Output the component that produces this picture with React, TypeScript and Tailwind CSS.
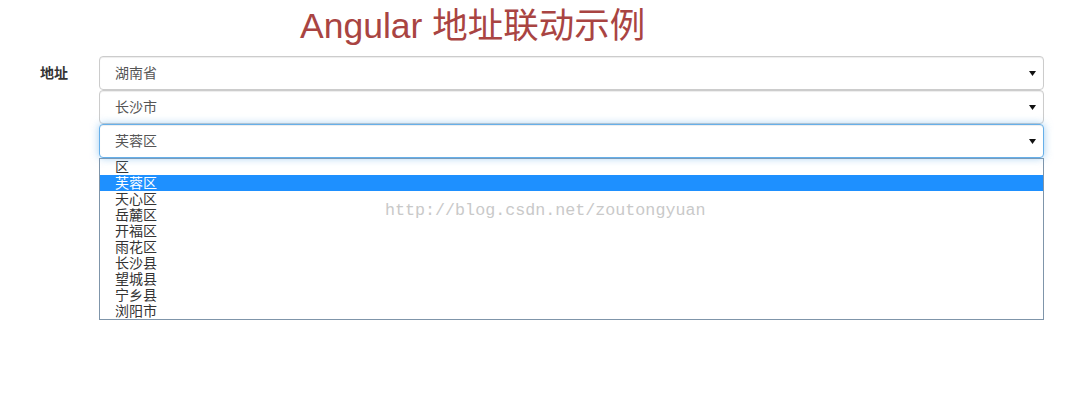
import React from "react";

const Arrow = () => (
  <svg width="7" height="5" viewBox="0 0 7 5" className="shrink-0">
    <polygon points="0,0 7,0 3.5,5" fill="#111" />
  </svg>
);

const SelectBox = ({ value, focused }: { value: string; focused?: boolean }) => (
  <div
    className={
      focused
        ? "h-[34px] flex items-center justify-between pl-[15px] pr-[7px] bg-white rounded-[4px] border border-[#66afe9] shadow-[inset_0_1px_1px_rgba(0,0,0,0.075),0_0_8px_rgba(102,175,233,0.6)] relative z-10"
        : "h-[34px] flex items-center justify-between pl-[15px] pr-[7px] bg-white rounded-[4px] border border-[#cccccc] shadow-[inset_0_1px_1px_rgba(0,0,0,0.075)]"
    }
  >
    <span className="text-[14px] leading-[20px] text-[#555555]">{value}</span>
    <Arrow />
  </div>
);

const options = ["区", "芙蓉区", "天心区", "岳麓区", "开福区", "雨花区", "长沙县", "望城县", "宁乡县", "浏阳市"];

export default function App() {
  return (
    <div className="relative w-[1075px] h-[402px] bg-white font-['Liberation_Sans','Noto_Sans_CJK_SC',sans-serif] overflow-hidden">
      <h1 className="pl-[300px] pt-[6px] text-[35.5px] leading-[40px] font-normal text-[#a94442]">
        Angular 地址联动示例
      </h1>
      <div className="flex mt-[10px]">
        <div className="w-[99px] pl-[40px] h-[34px] flex items-center text-[14px] font-bold text-[#333333]">地址</div>
        <div className="w-[945px] flex flex-col">
          <SelectBox value="湖南省" />
          <SelectBox value="长沙市" />
          <SelectBox value="芙蓉区" focused />
          <ul className="border border-[#7f95aa] bg-white">
            {options.map((o, i) => (
              <li
                key={o}
                className={
                  i === 1
                    ? "h-[16px] pl-[15px] text-[14px] leading-[16px] bg-[#1e90ff] text-white"
                    : "h-[16px] pl-[15px] text-[14px] leading-[16px] text-[#333333]"
                }
              >
                {o}
              </li>
            ))}
          </ul>
        </div>
      </div>
      <div className="absolute left-[385px] top-[201px] text-[16.7px] leading-[20px] text-[#c9c9c9] font-['Liberation_Mono',monospace] pointer-events-none">
        http://blog.csdn.net/zoutongyuan
      </div>
    </div>
  );
}
